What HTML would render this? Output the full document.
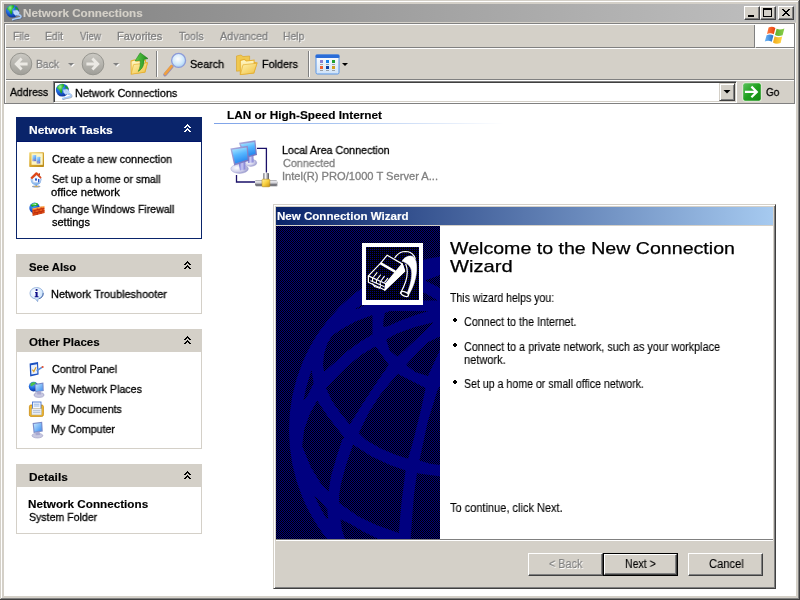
<!DOCTYPE html>
<html><head><meta charset="utf-8"><title>Network Connections</title>
<style>
html,body{margin:0;padding:0;background:#d4d0c8;}
body{width:800px;height:600px;overflow:hidden;font-family:"Liberation Sans",sans-serif;}
#root{position:relative;width:800px;height:600px;overflow:hidden;background:#d4d0c8;}
#root div,#root span,#root svg{position:absolute;box-sizing:border-box;}
.t{white-space:pre;transform-origin:0 0;will-change:transform;}
.gl{background:#808080;} .wl{background:#fff;} .dl{background:#404040;}
</style>
<style>
.cb{width:16px;height:14px;background:#d4d0c8;border:1px solid;border-color:#fff #404040 #404040 #fff;box-shadow:inset -1px -1px 0 #808080;}
</style>
<style>
.btn{background:#d4d0c8;border:1px solid;border-color:#fff #404040 #404040 #fff;box-shadow:inset -1px -1px 0 #808080;}
</style>

</head><body>
<div id="root">
<!-- main window frame -->
<div style="left:0;top:0;width:800px;height:600px;background:#d4d0c8;"></div>
<div class="wl" style="left:1px;top:1px;width:797px;height:1px;"></div>
<div class="wl" style="left:1px;top:1px;width:1px;height:597px;"></div>
<div class="gl" style="left:798px;top:1px;width:1px;height:598px;"></div>
<div class="gl" style="left:1px;top:598px;width:798px;height:1px;"></div>
<div class="dl" style="left:799px;top:0;width:1px;height:600px;"></div>
<div class="dl" style="left:0;top:599px;width:800px;height:1px;"></div>
<!-- title bar (inactive) -->
<div style="left:4px;top:4px;width:792px;height:18px;background:linear-gradient(90deg,#808080,#c0c0c0);"></div>
<!-- title icon -->
<svg style="left:5px;top:4px;" width="18" height="18" viewBox="0 0 18 18">
 <defs><radialGradient id="gb" cx="38%" cy="30%" r="75%"><stop offset="0" stop-color="#58b0ff"/><stop offset="0.55" stop-color="#1a62d8"/><stop offset="1" stop-color="#0a2a90"/></radialGradient>
 <radialGradient id="gg" cx="45%" cy="30%" r="75%"><stop offset="0" stop-color="#9af090"/><stop offset="0.5" stop-color="#2fb82c"/><stop offset="1" stop-color="#0c8a18"/></radialGradient></defs>
 <circle cx="7.3" cy="7.1" r="6.4" fill="url(#gb)"/>
 <path d="M1.8 5 C2.8 2.4 5.4 0.9 8 0.9 C9.4 1.2 9.6 2.4 8.8 3.4 C7.8 4.6 6.8 5.4 7.2 6.8 C7.6 8.4 7 9.8 6.2 10.8 C5.4 9.6 4.8 8.4 4.2 7 C3.6 6 2.6 5.8 1.8 5Z" fill="url(#gg)"/>
 <path d="M10.4 3 C11.6 2.6 12.9 3.8 13.4 5.6 C13.1 6.8 12 6.6 11.2 5.8 C10.5 5 10.1 3.8 10.4 3Z" fill="#18a028"/>
 <path d="M13.4 10.6 C15.2 11 16.6 12.2 15.7 13.3 C14.6 14.4 11 14 7.8 15.6" stroke="#3a4a70" stroke-opacity="0.45" stroke-width="1.9" fill="none" stroke-linecap="round" transform="translate(0.5,0.5)"/>
 <path d="M13.4 10.6 C15.2 11 16.6 12.2 15.7 13.3 C14.6 14.4 11 14 7.8 15.6" stroke="#a8ccf8" stroke-width="1.7" fill="none" stroke-linecap="round"/>
 <path d="M8 6.8 L12.2 5.9 L14.3 8.6 L13.7 11 L10.4 11.6 L8.6 9.4 Z" fill="#c6defc" stroke="#8ab0e8" stroke-width="0.4"/>
 <path d="M9.2 7.6 L11.8 7 M9.8 9 L12.6 8.4 M10.6 10.4 L13 9.8" stroke="#9cc0f0" stroke-width="0.5"/>
</svg>
<!-- caption buttons -->
<div class="cb" style="left:744px;top:6px;"></div>
<div class="cb" style="left:760px;top:6px;"></div>
<div class="cb" style="left:778px;top:6px;"></div>
<div style="left:748px;top:15px;width:6px;height:2px;background:#000;"></div>
<div style="left:763px;top:8px;width:9px;height:9px;border:1px solid #000;border-top-width:2px;"></div>
<svg style="left:782px;top:9px;" width="8" height="7" viewBox="0 0 8 7" shape-rendering="crispEdges"><path d="M0 0h2v1h1v1h2v-1h1v-1h2v1h-1v1h-1v1h-1v1h1v1h1v1h1v1h-2v-1h-1v-1h-2v1h-1v1h-2v-1h1v-1h1v-1h1v-1h-1v-1h-1v-1h-1z" fill="#000"/></svg>
<!-- rebar frame lines -->
<div class="gl" style="left:4px;top:23px;width:792px;height:1px;"></div>
<div class="wl" style="left:5px;top:24px;width:790px;height:1px;"></div>
<div class="gl" style="left:4px;top:23px;width:1px;height:81px;"></div>
<div class="wl" style="left:5px;top:24px;width:1px;height:79px;"></div>
<div class="gl" style="left:794px;top:23px;width:1px;height:81px;"></div>
<div class="wl" style="left:795px;top:23px;width:1px;height:81px;"></div>
<!-- throbber -->
<div style="left:755px;top:24px;width:39px;height:23px;background:#fff;"></div>
<div class="gl" style="left:754px;top:25px;width:1px;height:22px;"></div>
<div class="gl" style="left:6px;top:47px;width:749px;height:1px;"></div>
<div class="gl" style="left:756px;top:47px;width:38px;height:1px;"></div>
<div class="wl" style="left:6px;top:48px;width:788px;height:1px;"></div>
<svg style="left:764px;top:26px;" width="22" height="20" viewBox="0 0 22 20">
 <defs>
  <linearGradient id="fr" x1="0" x2="1"><stop offset="0" stop-color="#ff7a3c"/><stop offset="1" stop-color="#e8400c"/></linearGradient>
  <linearGradient id="fg" x1="0" x2="1"><stop offset="0" stop-color="#5fae2c"/><stop offset="1" stop-color="#8ad04a"/></linearGradient>
  <linearGradient id="fb" x1="0" x2="1"><stop offset="0" stop-color="#6cb6f8"/><stop offset="1" stop-color="#2a72c8"/></linearGradient>
  <linearGradient id="fy" x1="0" x2="1"><stop offset="0" stop-color="#f0a818"/><stop offset="1" stop-color="#ffd84a"/></linearGradient>
 </defs>
 <path d="M4.6 1.6 C7 0.4 9 0.6 11.4 2 L9.8 8.2 C7.6 7 5.4 6.8 3 8 Z" fill="url(#fr)"/>
 <path d="M12.6 2.8 C15 4 17.4 3.8 20.4 2.6 L18.6 9.2 C16 10.2 13.6 10.4 11 9 Z" fill="url(#fg)"/>
 <path d="M2.6 9.2 C5 8 7.2 8.2 9.4 9.4 L7.8 15.8 C5.6 14.6 3.4 14.4 0.8 15.6 Z" fill="url(#fb)"/>
 <path d="M10.6 10.2 C13 11.6 15.6 11.4 18.2 10.4 L16.6 17 C14 18 11.4 18.2 9 16.6 Z" fill="url(#fy)"/>
</svg>
<!-- toolbar / address separators -->
<div class="gl" style="left:6px;top:79px;width:788px;height:1px;"></div>
<div class="wl" style="left:6px;top:80px;width:788px;height:1px;"></div>
<div class="gl" style="left:4px;top:103px;width:791px;height:1px;"></div>
<!-- client area -->
<div style="left:4px;top:104px;width:792px;height:492px;background:#fff;"></div>

<!-- toolbar icons -->
<svg style="left:0;top:48px;" width="360" height="32" viewBox="0 48 360 32">
 <defs>
  <linearGradient id="dg" x1="0" y1="0" x2="0" y2="1"><stop offset="0" stop-color="#cbc9c3"/><stop offset="1" stop-color="#9f9e98"/></linearGradient>
  <linearGradient id="fo" x1="0" y1="0" x2="1" y2="1"><stop offset="0" stop-color="#fff3b0"/><stop offset="1" stop-color="#f0c040"/></linearGradient>
  <linearGradient id="fo2" x1="0" y1="0" x2="0" y2="1"><stop offset="0" stop-color="#fff8c8"/><stop offset="1" stop-color="#f6d060"/></linearGradient>
  <linearGradient id="ga" x1="0" y1="0" x2="1" y2="0"><stop offset="0" stop-color="#5fd048"/><stop offset="1" stop-color="#1f8a1c"/></linearGradient>
  <radialGradient id="lens" cx="45%" cy="40%" r="65%"><stop offset="0" stop-color="#ffffff"/><stop offset="0.6" stop-color="#cfe8fb"/><stop offset="1" stop-color="#9cc8f0"/></radialGradient>
  <linearGradient id="vw" x1="0" y1="0" x2="0" y2="1"><stop offset="0" stop-color="#ffffff"/><stop offset="1" stop-color="#cfe2f8"/></linearGradient>
 </defs>
 <!-- back (disabled) -->
 <circle cx="21" cy="64" r="10.8" fill="url(#dg)" stroke="#96958f" stroke-width="1"/>
 <path d="M14.2 64 L20.6 57.6 L22.6 59.6 L19.8 62.4 L27.6 62.4 L27.6 65.6 L19.8 65.6 L22.6 68.4 L20.6 70.4 Z" fill="#ebe9e4"/>
 <path d="M68 63h6l-3 3z" fill="#fff" transform="translate(1,1)"/>
 <path d="M68 63h6l-3 3z" fill="#808080"/>
 <!-- forward (disabled) -->
 <circle cx="93" cy="64" r="10.8" fill="url(#dg)" stroke="#96958f" stroke-width="1"/>
 <path d="M99.8 64 L93.4 57.6 L91.4 59.6 L94.2 62.4 L86.4 62.4 L86.4 65.6 L94.2 65.6 L91.4 68.4 L93.4 70.4 Z" fill="#ebe9e4"/>
 <path d="M113 63h6l-3 3z" fill="#fff" transform="translate(1,1)"/>
 <path d="M113 63h6l-3 3z" fill="#808080"/>
 <!-- up -->
 <path d="M130.5 60.5 L135 59.3 L137 60.8 L146 59.6 L146 62 L148 62.4 L145.4 72.6 L130.8 74.6 Z" fill="#e6b030"/>
 <path d="M131.5 61.5 L135 60.4 L136.8 61.8 L145 60.8 L145 71.8 L131.5 73.6 Z" fill="url(#fo2)"/>
 <path d="M133.6 64.6 L147.4 62.8 L144.8 72.2 L131.2 74.2 Z" fill="url(#fo)" stroke="#e0a828" stroke-width="0.6"/>
 <path d="M140.2 52.8 L148 58.6 L144 59.4 C144.4 64.4 142.6 69 138.2 71.4 C140.4 67.6 140.6 64 140 60.2 L135 61 Z" fill="url(#ga)" stroke="#1a7a18" stroke-width="0.5"/>
 <!-- separator -->
 <rect x="156" y="51" width="1" height="26" fill="#808080"/><rect x="157" y="51" width="1" height="26" fill="#fff"/>
 <!-- search -->
 <path d="M171.8 66.6 L165 74.6" stroke="#9a8fb0" stroke-width="3.6" stroke-linecap="round"/>
 <path d="M171.6 66.2 L165.2 73.8" stroke="#f0a040" stroke-width="2.6" stroke-linecap="round"/>
 <circle cx="178.6" cy="60.4" r="7" fill="url(#lens)" stroke="#8c9ad8" stroke-width="1.3"/>
 <!-- folders -->
 <path d="M236.5 56 L241 55 L243 56.6 L249.6 56 L249.6 70 L236.5 71.2 Z" fill="#f0c850" stroke="#d8a020" stroke-width="0.6"/>
 <path d="M239.8 60 L244.4 58.8 L246.6 60.4 L254.6 59.6 L254.6 62 L257.6 62.6 L254.2 73.4 L239.8 75 Z" fill="#e6b030"/>
 <path d="M240.8 61 L244.2 60 L246.2 61.4 L253.6 60.8 L253.6 72.4 L240.8 74 Z" fill="url(#fo2)"/>
 <path d="M243 64.8 L257 63.2 L253.8 73 L240.4 74.6 Z" fill="url(#fo)" stroke="#e0a828" stroke-width="0.6"/>
 <!-- separator -->
 <rect x="308" y="51" width="1" height="26" fill="#808080"/><rect x="309" y="51" width="1" height="26" fill="#fff"/>
 <!-- views -->
 <rect x="316" y="55" width="23" height="19" rx="1.5" fill="url(#vw)" stroke="#5a96e6" stroke-width="1"/>
 <rect x="315.5" y="54.5" width="24" height="3.5" rx="1.2" fill="#2a6cd8"/>
 <rect x="320" y="60" width="3" height="3" fill="#8a80d0"/><rect x="326" y="60" width="3" height="3" fill="#1a80e8"/><rect x="332" y="60" width="3" height="3" fill="#20a030"/>
 <rect x="320" y="66" width="3" height="3" fill="#f06030"/><rect x="326" y="66" width="3" height="3" fill="#1040a0"/><rect x="332" y="66" width="3" height="3" fill="#d0a020"/>
 <g fill="#9aa0a8"><rect x="320" y="64" width="3" height="1"/><rect x="326" y="64" width="3" height="1"/><rect x="332" y="64" width="3" height="1"/><rect x="320" y="70" width="3" height="1"/><rect x="326" y="70" width="3" height="1"/><rect x="332" y="70" width="3" height="1"/></g>
 <path d="M342 63h6l-3 3z" fill="#000"/>
</svg>
<!-- address combo -->
<div style="left:53px;top:81px;width:684px;height:22px;background:#fff;border:1px solid;border-color:#808080 #fff #fff #808080;box-shadow:inset 1px 1px 0 #404040, inset -1px -1px 0 #d4d0c8;"></div>
<svg style="left:55px;top:83px;" width="18" height="18" viewBox="0 0 18 18">
 <circle cx="7.3" cy="7.1" r="6.4" fill="url(#gb)"/>
 <path d="M1.8 5 C2.8 2.4 5.4 0.9 8 0.9 C9.4 1.2 9.6 2.4 8.8 3.4 C7.8 4.6 6.8 5.4 7.2 6.8 C7.6 8.4 7 9.8 6.2 10.8 C5.4 9.6 4.8 8.4 4.2 7 C3.6 6 2.6 5.8 1.8 5Z" fill="url(#gg)"/>
 <path d="M10.4 3 C11.6 2.6 12.9 3.8 13.4 5.6 C13.1 6.8 12 6.6 11.2 5.8 C10.5 5 10.1 3.8 10.4 3Z" fill="#18a028"/>
 <path d="M13.4 10.6 C15.2 11 16.6 12.2 15.7 13.3 C14.6 14.4 11 14 7.8 15.6" stroke="#3a4a70" stroke-opacity="0.45" stroke-width="1.9" fill="none" stroke-linecap="round" transform="translate(0.5,0.5)"/>
 <path d="M13.4 10.6 C15.2 11 16.6 12.2 15.7 13.3 C14.6 14.4 11 14 7.8 15.6" stroke="#a8ccf8" stroke-width="1.7" fill="none" stroke-linecap="round"/>
 <path d="M8 6.8 L12.2 5.9 L14.3 8.6 L13.7 11 L10.4 11.6 L8.6 9.4 Z" fill="#c6defc" stroke="#8ab0e8" stroke-width="0.4"/>
 <path d="M9.2 7.6 L11.8 7 M9.8 9 L12.6 8.4 M10.6 10.4 L13 9.8" stroke="#9cc0f0" stroke-width="0.5"/>
</svg>
<!-- combo dropdown button -->
<div style="left:719px;top:83px;width:16px;height:18px;background:#d4d0c8;border:1px solid;border-color:#d4d0c8 #404040 #404040 #d4d0c8;box-shadow:inset 1px 1px 0 #fff, inset -1px -1px 0 #808080;"></div>
<svg style="left:723px;top:90px;" width="8" height="4" viewBox="0 0 8 4"><path d="M0.5 0h7l-3.5 3.5z" fill="#000"/></svg>
<!-- go button -->
<svg style="left:742px;top:82px;" width="20" height="20" viewBox="0 0 20 20">
 <defs><linearGradient id="gog" x1="0" y1="0" x2="1" y2="1"><stop offset="0" stop-color="#5cc25c"/><stop offset="0.5" stop-color="#1fa01f"/><stop offset="1" stop-color="#148a14"/></linearGradient></defs>
 <rect x="0.5" y="0.5" width="19" height="19" rx="2.5" fill="#e8f4e0"/>
 <rect x="1.2" y="1.2" width="17.6" height="17.6" rx="2" fill="url(#gog)"/>
 <path d="M4 9.9h10 M10.2 5.4 L14.8 9.9 L10.2 14.4" stroke="#fff" stroke-width="2.2" fill="none" stroke-linecap="square" stroke-linejoin="miter"/>
</svg>

<!-- Network Tasks -->
<div style="left:16px;top:117px;width:186px;height:25px;background:#0a246a;"></div>
<div style="left:16px;top:141px;width:186px;height:98px;background:#fff;border:1px solid #0a246a;border-top-color:#00146a;"></div>
<!-- See Also -->
<div style="left:16px;top:254px;width:186px;height:23px;background:#d4d0c8;"></div>
<div style="left:16px;top:277px;width:186px;height:37px;background:#fff;border:1px solid #d4d0c8;border-top:none;"></div>
<!-- Other Places -->
<div style="left:16px;top:329px;width:186px;height:23px;background:#d4d0c8;"></div>
<div style="left:16px;top:352px;width:186px;height:97px;background:#fff;border:1px solid #d4d0c8;border-top:none;"></div>
<!-- Details -->
<div style="left:16px;top:464px;width:186px;height:23px;background:#d4d0c8;"></div>
<div style="left:16px;top:487px;width:186px;height:47px;background:#fff;border:1px solid #d4d0c8;border-top:none;"></div>
<!-- chevrons -->
<svg style="left:184px;top:124px;" width="7" height="8" viewBox="0 0 7 8" shape-rendering="crispEdges"><path d="M3 0h1v1h1v1h1v1h1v1h-2v-1h-1v-1h-1v1h-1v1h-2v-1h1v-1h1v-1h1z M3 4h1v1h1v1h1v1h1v1h-2v-1h-1v-1h-1v1h-1v1h-2v-1h1v-1h1v-1h1z" fill="#fff"/></svg>
<svg style="left:184px;top:261px;" width="7" height="8" viewBox="0 0 7 8" shape-rendering="crispEdges"><path d="M3 0h1v1h1v1h1v1h1v1h-2v-1h-1v-1h-1v1h-1v1h-2v-1h1v-1h1v-1h1z M3 4h1v1h1v1h1v1h1v1h-2v-1h-1v-1h-1v1h-1v1h-2v-1h1v-1h1v-1h1z" fill="#000"/></svg>
<svg style="left:184px;top:336px;" width="7" height="8" viewBox="0 0 7 8" shape-rendering="crispEdges"><path d="M3 0h1v1h1v1h1v1h1v1h-2v-1h-1v-1h-1v1h-1v1h-2v-1h1v-1h1v-1h1z M3 4h1v1h1v1h1v1h1v1h-2v-1h-1v-1h-1v1h-1v1h-2v-1h1v-1h1v-1h1z" fill="#000"/></svg>
<svg style="left:184px;top:471px;" width="7" height="8" viewBox="0 0 7 8" shape-rendering="crispEdges"><path d="M3 0h1v1h1v1h1v1h1v1h-2v-1h-1v-1h-1v1h-1v1h-2v-1h1v-1h1v-1h1z M3 4h1v1h1v1h1v1h1v1h-2v-1h-1v-1h-1v1h-1v1h-2v-1h1v-1h1v-1h1z" fill="#000"/></svg>
<!-- task icons -->
<svg style="left:28px;top:151px;" width="18" height="18" viewBox="0 0 18 18">
 <defs><linearGradient id="gold" x1="0" y1="0" x2="1" y2="1"><stop offset="0" stop-color="#f2d878"/><stop offset="0.5" stop-color="#d8a830"/><stop offset="1" stop-color="#b88818"/></linearGradient>
 <linearGradient id="mon" x1="0" y1="0" x2="1" y2="1"><stop offset="0" stop-color="#c4e8ff"/><stop offset="1" stop-color="#3a8cf0"/></linearGradient></defs>
 <rect x="1.2" y="1.3" width="14.8" height="14.8" rx="0.8" fill="url(#gold)"/>
 <rect x="3.5" y="2.3" width="11.2" height="11.5" fill="#fdf5c4"/>
 <rect x="4.4" y="3.9" width="3.8" height="4.4" rx="0.5" fill="url(#mon)"/>
 <rect x="4.6" y="8.2" width="3.6" height="2" fill="#6a78d0"/>
 <rect x="8.5" y="5.8" width="3.8" height="4.6" rx="0.5" fill="url(#mon)"/>
 <rect x="8.7" y="10.3" width="3.6" height="2.2" fill="#6a78d0"/>
 <path d="M5.4 9.2h0.8M9.6 11.4h0.8" stroke="#fff" stroke-width="0.7"/>
</svg>
<svg style="left:28px;top:171px;" width="18" height="18" viewBox="0 0 18 18">
 <defs><radialGradient id="hb" cx="40%" cy="40%" r="65%"><stop offset="0" stop-color="#e8f4ff"/><stop offset="1" stop-color="#6aa4e8"/></radialGradient></defs>
 <ellipse cx="8.2" cy="15.6" rx="4.2" ry="1" fill="#9aa0b0"/><rect x="6.8" y="15" width="2.8" height="1" fill="#e8b830"/>
 <rect x="7.6" y="12" width="1.2" height="3.4" fill="#7a90c0"/>
 <circle cx="8" cy="8.6" r="5.4" fill="url(#hb)"/>
 <path d="M4.4 7.4 L8.6 4 L12.8 7.6 L12.2 11.8 L5.2 11.4 Z" fill="#f4f8ff" stroke="#9ab0d8" stroke-width="0.4"/>
 <path d="M2.4 6.8 L7.6 1.6 L9 1.2 L13.6 6.4 L12.6 7.8 L8.6 4 L4 8.2 Z" fill="#e04818"/>
 <path d="M10.6 2.2h1.4v2h-1.4z" fill="#c03c10"/>
 <rect x="7" y="7.4" width="2" height="2.2" fill="#2a5ac8"/><rect x="10" y="8" width="1.4" height="3.4" fill="#2a5ac8"/>
</svg>
<svg style="left:28px;top:201px;" width="18" height="18" viewBox="0 0 18 18">
 <defs><linearGradient id="brk" x1="0" y1="0" x2="0.2" y2="1"><stop offset="0" stop-color="#ff9a3a"/><stop offset="0.5" stop-color="#f0641c"/><stop offset="1" stop-color="#c8380c"/></linearGradient></defs>
 <circle cx="6.6" cy="6.9" r="5.3" fill="url(#gb)"/>
 <path d="M2.6 4.4 C3.8 2.4 6.4 1.6 8.8 2 C10 2.6 10.6 3.6 9.6 4.4 C8.4 5 7 4.6 6 5.2 C5 6 3.6 5.8 2.6 4.4Z" fill="url(#gg)"/>
 <path d="M6.4 3.4 C7 2.8 8 2.8 8.4 3.4 C7.8 4 7 4 6.4 3.4Z" fill="#e8fff0"/>
 <path d="M4.4 7.5 L16.3 4.9 L16.7 12 L4.6 15 Z" fill="url(#brk)"/>
 <path d="M4.45 10 L16.45 7.3 M4.5 12.5 L16.6 9.7 M9.2 6.5 L9.3 8.9 M13 5.6 L13.1 8 M6.8 9.5 L6.9 12 M11 8.5 L11.1 11 M14.8 7.7 L14.9 10.1 M9.2 11.4 L9.3 13.8 M13 10.5 L13.1 12.9" stroke="#b01c08" stroke-width="0.7"/>
 <path d="M4.6 8 L16.2 5.4" stroke="#ffd070" stroke-width="0.6"/>
</svg>
<!-- see also icon -->
<svg style="left:28px;top:286px;" width="18" height="18" viewBox="0 0 18 18">
 <defs><radialGradient id="inf" cx="40%" cy="35%" r="70%"><stop offset="0" stop-color="#ffffff"/><stop offset="0.7" stop-color="#d4e8fc"/><stop offset="1" stop-color="#8ab0e0"/></radialGradient></defs>
 <path d="M8.6 1.6 C12.6 1.6 15.2 4.2 15.2 7.4 C15.2 10.4 13 12.4 10.2 12.8 L9.6 15.6 L7.4 12.8 C4.4 12.6 2 10.4 2 7.4 C2 4.2 4.8 1.6 8.6 1.6Z" fill="url(#inf)" stroke="#7a9cd0" stroke-width="0.7"/>
 <path d="M11 12.6 C13.6 12 15.4 10 15.2 7" stroke="#3a5aa0" stroke-width="0.8" fill="none"/>
 <circle cx="8.6" cy="4" r="1.1" fill="#10108a"/>
 <path d="M7.2 6h2.4v4.2h0.9v1h-3.8v-1h0.9v-3.2h-0.6z" fill="#10108a"/>
</svg>
<!-- other places icons -->
<svg style="left:28px;top:361px;" width="18" height="18" viewBox="0 0 18 18">
 <path d="M1.6 2.4 L10 1 L10.6 13.6 L2.2 15.4 Z" fill="#1a50c0"/>
 <path d="M3 4.2 L9 3.2 L9.4 12.4 L3.4 13.6 Z" fill="#e8f0fc"/>
 <path d="M4.4 8.6 L5.8 10.6 L8 6.2" stroke="#e0a020" stroke-width="1.1" fill="none"/>
 <path d="M8.6 9.8 L14 6.4" stroke="#5a90e0" stroke-width="1.6"/>
 <circle cx="14.6" cy="6" r="1.1" fill="#e05030"/>
</svg>
<svg style="left:28px;top:381px;" width="18" height="18" viewBox="0 0 18 18">
 <circle cx="5.6" cy="5.6" r="4.8" fill="url(#gb)"/>
 <path d="M2.6 2.6 C4 1 6.6 0.8 7.8 1.6 C8 3 6.6 4 5.4 4 C4.6 5.2 3.4 5.4 2.4 4.8 Z" fill="#4cc04a"/>
 <path d="M6.6 3 L15.4 1.6 L15.8 10 L7.4 11.6 Z" fill="#7a8ac8"/>
 <path d="M7.6 4 L14.4 2.8 L14.8 9.2 L8.2 10.4 Z" fill="url(#mon)"/>
 <ellipse cx="11" cy="14" rx="5" ry="2.4" fill="#c8c8e0" stroke="#8a8ab8" stroke-width="0.5"/>
 <path d="M9.2 10.6 L12.8 10 L13.2 13.4 L9.2 13.6 Z" fill="#a8a8d0"/>
</svg>
<svg style="left:28px;top:401px;" width="18" height="18" viewBox="0 0 18 18">
 <rect x="1.4" y="4" width="14" height="11.4" rx="1.6" fill="#f0b830" stroke="#c88a10" stroke-width="0.8"/>
 <rect x="4.4" y="1" width="8.6" height="8" fill="#f4f8ff" stroke="#3a6ac8" stroke-width="0.8"/>
 <path d="M5.8 3.2h5.6M5.8 5h5.6" stroke="#8ab0e0" stroke-width="0.9"/>
 <rect x="3.6" y="7.6" width="10.2" height="6.4" fill="#e8ecf4" stroke="#b0a070" stroke-width="0.5"/>
 <path d="M5 9.6h7.4M5 11.4h7.4" stroke="#a8b8d0" stroke-width="0.8"/>
</svg>
<svg style="left:28px;top:421px;" width="18" height="18" viewBox="0 0 18 18">
 <path d="M4.6 2 L14.2 0.8 L14.8 10.4 L5.6 12 Z" fill="#7a8ac8"/>
 <path d="M5.8 3 L13.2 2 L13.6 9.6 L6.6 10.8 Z" fill="url(#mon)"/>
 <ellipse cx="9.4" cy="14.6" rx="5.4" ry="2.4" fill="#c8c8e0" stroke="#8a8ab8" stroke-width="0.5"/>
 <path d="M7.6 11.2 L11.6 10.6 L12 14 L7.6 14.2 Z" fill="#a8a8d0"/>
</svg>

<!-- group header line -->
<div style="left:214px;top:123px;width:290px;height:1px;background:linear-gradient(90deg,#7da2e8 0%,#a8c4f0 40%,#ffffff 100%);"></div>
<!-- LAN icon -->
<svg style="left:226px;top:136px;" width="56" height="54" viewBox="226 136 56 54">
 <defs>
  <linearGradient id="scr" x1="0" y1="0" x2="0.3" y2="1"><stop offset="0" stop-color="#b8ecff"/><stop offset="0.5" stop-color="#58b8ff"/><stop offset="1" stop-color="#2a8af0"/></linearGradient>
  <linearGradient id="bez" x1="0" y1="0" x2="1" y2="1"><stop offset="0" stop-color="#b0b0e0"/><stop offset="1" stop-color="#6a68b8"/></linearGradient>
  <radialGradient id="bas" cx="35%" cy="40%" r="70%"><stop offset="0" stop-color="#ffffff"/><stop offset="0.6" stop-color="#d0d0ea"/><stop offset="1" stop-color="#9090c8"/></radialGradient>
  <linearGradient id="std" x1="0" y1="0" x2="1" y2="0"><stop offset="0" stop-color="#6a68d0"/><stop offset="0.5" stop-color="#c8c8f4"/><stop offset="1" stop-color="#7a78d0"/></linearGradient>
  <linearGradient id="met" x1="0" y1="0" x2="0" y2="1"><stop offset="0" stop-color="#8a8a90"/><stop offset="0.3" stop-color="#f4f4f8"/><stop offset="0.7" stop-color="#a0a0a8"/><stop offset="1" stop-color="#404048"/></linearGradient>
  <linearGradient id="metv" x1="0" y1="0" x2="1" y2="0"><stop offset="0" stop-color="#707078"/><stop offset="0.4" stop-color="#f4f4f8"/><stop offset="1" stop-color="#505058"/></linearGradient>
  <linearGradient id="yel" x1="0" y1="0" x2="1" y2="1"><stop offset="0" stop-color="#fff0a0"/><stop offset="0.5" stop-color="#f8d040"/><stop offset="1" stop-color="#c89010"/></linearGradient>
 </defs>
 <!-- wires -->
 <path d="M257 148.4 H266.4 V172.5" stroke="#1a1068" stroke-width="1.3" fill="none"/>
 <path d="M236.5 175 V182 H255" stroke="#1a1068" stroke-width="1.3" fill="none"/>
 <!-- back computer -->
 <ellipse cx="250.8" cy="162.8" rx="6" ry="3.6" fill="url(#bas)" stroke="#9a9ad0" stroke-width="0.4"/>
 <path d="M247.4 156 L253.4 154.6 L253.6 162.4 L248 163 Z" fill="url(#std)"/>
 <path d="M239 142.8 L255.4 140.2 L257 155 L244 158.6 Z" fill="url(#bez)"/>
 <path d="M240.4 144.2 L254.4 142 L255.6 153.8 L248.6 156 Z" fill="url(#scr)"/>
 <!-- front computer -->
 <ellipse cx="239.6" cy="168.8" rx="8.8" ry="4.6" fill="url(#bas)" stroke="#9a9ad0" stroke-width="0.4"/>
 <path d="M238.6 162.6 L245.2 160.6 L245.4 169.6 L240 170.6 Z" fill="url(#std)"/>
 <path d="M230.4 148.4 L247.8 145.8 L249 160.8 L234.2 165.6 Z" fill="url(#bez)"/>
 <path d="M232 149.8 L246.6 147.6 L247.6 159.6 L235.2 163.6 Z" fill="url(#scr)"/>
 <!-- T connector -->
 <rect x="255.6" y="181.2" width="22" height="5.2" rx="1" fill="#606068" opacity="0.5"/>
 <rect x="255" y="180.2" width="22" height="5.2" rx="1" fill="url(#met)"/>
 <rect x="263.2" y="173" width="5.8" height="7" rx="0.8" fill="url(#metv)"/>
 <rect x="262" y="179.2" width="7.8" height="7.6" rx="0.8" fill="url(#yel)" stroke="#b88a10" stroke-width="0.5"/>
</svg>

<!-- wizard dialog frame -->
<div style="left:273px;top:204px;width:503px;height:385px;background:#d4d0c8;border:1px solid;border-color:#d4d0c8 #404040 #404040 #d4d0c8;box-shadow:inset 1px 1px 0 #fff, inset -1px -1px 0 #808080;"></div>
<div style="left:276px;top:207px;width:497px;height:18px;background:linear-gradient(90deg,#0a246a,#a6caf0);"></div>
<!-- white page -->
<div style="left:440px;top:226px;width:333px;height:313px;background:#fff;"></div>
<!-- etched separator -->
<div class="gl" style="left:276px;top:539px;width:497px;height:1px;"></div>
<div class="wl" style="left:276px;top:540px;width:497px;height:1px;"></div>
<!-- bullets -->
<svg style="left:453px;top:318px;" width="4" height="4" shape-rendering="crispEdges"><path d="M1 0h2v1h1v2h-1v1h-2v-1h-1v-2h1z" fill="#000"/></svg>
<svg style="left:453px;top:343px;" width="4" height="4" shape-rendering="crispEdges"><path d="M1 0h2v1h1v2h-1v1h-2v-1h-1v-2h1z" fill="#000"/></svg>
<svg style="left:453px;top:380px;" width="4" height="4" shape-rendering="crispEdges"><path d="M1 0h2v1h1v2h-1v1h-2v-1h-1v-2h1z" fill="#000"/></svg>
<!-- buttons -->
<div class="btn" style="left:528px;top:553px;width:75px;height:23px;"></div>
<div style="left:603px;top:553px;width:75px;height:23px;background:#000;"></div>
<div class="btn" style="left:604px;top:554px;width:73px;height:21px;"></div>
<div class="btn" style="left:688px;top:553px;width:75px;height:23px;"></div>

<!-- wizard banner -->
<svg style="left:276px;top:226px;" width="164" height="313" viewBox="276 226 164 313">
 <defs>
  <pattern id="dith" x="0" y="0" width="2" height="2" patternUnits="userSpaceOnUse"><rect width="2" height="2" fill="#000080"/><rect x="0" y="0" width="1" height="1" fill="#000"/><rect x="1" y="1" width="1" height="1" fill="#000"/></pattern>
  <pattern id="dith2" x="0" y="0" width="2" height="2" patternUnits="userSpaceOnUse"><rect width="2" height="2" fill="#000"/><rect x="0" y="1" width="1" height="1" fill="#000080"/></pattern>
 </defs>
 <rect x="276" y="226" width="164" height="313" fill="url(#dith)" shape-rendering="crispEdges"/>
 <circle cx="464" cy="430" r="175" fill="#000080"/>
 <!--CELLS-->
 <polygon points="372.5,315.0 356.0,321.2 343.5,328.0 332.2,335.6 327.2,343.8 324.1,353.8 322.9,365.0 324.1,372.0 334.8,362.5 347.2,351.2 361.0,341.2 372.5,334.4" fill="url(#dith)"/>
 <polygon points="385.0,313.0 390.0,311.0 428.5,311.0 415.0,315.2 400.0,320.8 388.0,326.2 383.2,327.0 383.4,320.0" fill="url(#dith)"/>
 <polygon points="386.3,339.4 396.3,333.8 415.0,327.0 433.8,322.2 427.5,328.8 411.3,343.8 397.5,357.0 389.4,350.0" fill="url(#dith)"/>
 <polygon points="406.2,365.0 417.5,351.9 427.5,342.5 440.0,336.2 440.0,350.0 433.0,365.0 428.0,376.0 415.0,371.9" fill="url(#dith)"/>
 <polygon points="375.6,346.2 361.0,355.0 346.0,367.5 338.5,375.0 326.0,388.1 332.2,401.2 341.0,413.8 349.8,424.4 363.5,402.5 377.5,381.2 388.8,365.0" fill="url(#dith)"/>
 <polygon points="397.5,373.8 425.6,388.1 421.2,408.8 413.5,440.0 408.1,458.8 396.2,455.0 381.2,448.8 366.0,440.0 358.8,433.1 368.8,412.5 380.0,395.0" fill="url(#dith)"/>
 <polygon points="440.0,386.0 437.5,390.0 432.5,406.2 427.5,422.5 423.8,440.0 419.4,460.6 430.0,463.8 440.0,465.0" fill="url(#dith)"/>
 <polygon points="311.6,370.0 313.6,383.0 308.0,395.0 303.5,400.6 306.0,388.0 309.0,378.0" fill="url(#dith)"/>
 <polygon points="317.2,400.6 328.5,417.5 344.3,437.5 342.2,440.0 337.2,455.0 331.0,476.2 328.5,491.9 321.0,483.8 311.0,467.5 302.2,446.2 302.9,440.0 304.1,430.0 309.8,413.8" fill="url(#dith)"/>
 <polygon points="353.0,444.4 371.2,456.2 390.0,465.0 405.6,470.6 403.1,490.0 401.2,505.5 398.8,533.0 377.5,525.5 358.8,516.8 339.1,503.0 339.1,495.0 341.0,483.8 346.0,465.0" fill="url(#dith)"/>
 <polygon points="314.1,494.9 321.0,501.8 327.2,509.2 328.2,519.2 326.0,518.0 319.8,506.8" fill="url(#dith)"/>
 <polygon points="416.9,473.3 430.0,475.0 440.0,476.2 440.0,539.0 410.6,539.0 413.1,505.5 413.8,496.2" fill="url(#dith)"/>
 <polygon points="340.4,519.2 351.0,524.2 363.5,531.8 377.5,538.5 377.5,539.0 345.0,539.0 342.2,530.5" fill="url(#dith)"/>
 <polygon points="425.0,280.6 440.0,275.0 440.0,288.0" fill="url(#dith)"/>
 <polygon points="405.0,282.0 438.0,300.6 405.0,300.6" fill="url(#dith)"/>
 <polygon points="355.0,309.0 362.0,305.0 365.0,305.0 358.0,308.8" fill="url(#dith)"/>
 <!--/CELLS-->
 <!-- icon box -->
 <rect x="362" y="243" width="61" height="62" fill="#fff"/>
 <rect x="366" y="247" width="53" height="53" fill="url(#dith2)" shape-rendering="crispEdges"/>
 <!--PLUG-->
 <g fill="none" stroke="#fff" stroke-width="1.25" stroke-linejoin="round" stroke-linecap="round">
  <!-- cable -->
  <path d="M394.9 257.8 C397.5 253.5, 401 251.6, 405.5 251.5 C410 251.5, 413.5 254, 415.2 258.4" stroke-width="1.2"/>
  <path d="M402.2 261 C403.5 258.5, 406.5 256, 410.4 256 C413 256, 415.2 258, 416 261.5 C417 266, 416.8 273, 415.3 278.8 C414 284.5, 411.5 290, 408.5 295.3 L407 293.4 C409 289, 411 282.5, 411.6 276.9 C412 272, 411.5 269.5, 410.4 267.5 C409 265, 407 263, 404.1 261.9 Z" fill="#fff" stroke-width="0.6"/>
  <path d="M405.8 264.2 C407.6 268.5, 407.8 275, 405.6 281.75 C404.5 285, 402.5 289.5, 400.4 293.2" stroke-width="1.2"/>
  <ellipse cx="404.7" cy="294" rx="4" ry="2.1" transform="rotate(24 404.7 294)" fill="#000010"/>
  <!-- body -->
  <path d="M387.2 255.2 L402.2 263.9 L404.6 271.1 L384.8 290 L368.4 282.2 L368.4 275.9 L380.9 262.9 Z" fill="url(#dith2)"/>
  <path d="M402.2 263.9 L404.6 271.1 L384.8 290 L385.8 283.7 Z" fill="#fff"/>
  <path d="M381.2 263.6 L394.6 271.4" stroke-width="2.6"/>
  <path d="M368.4 275.9 L385.8 283.7"/>
  <!-- contacts -->
  <path d="M373.6 277 L377 272.6 M377.5 278.9 L380.5 275 M381.4 280.3 L384.3 276.4 M384.8 282.2 L387.7 278.4" stroke-width="1.1"/>
  <!-- front teeth -->
  <path d="M370.8 280.8 L384 286.6 M372.6 277.8 L372.6 281.6 M376.4 279.6 L376.4 283.2 M380.2 281.4 L380.2 285 M372.8 283.8 L374.6 286.6 L379.6 288.2 L380.4 286.2" stroke-width="1.1"/>
 </g>
 <!--/PLUG-->
</svg>

<span class="t" style="left:23.21px;top:6.69px;font-size:11px;line-height:13px;color:#d4d0c8;transform:scaleX(1.0580);font-weight:bold;-webkit-text-stroke:0.15px;">Network Connections</span>
<span class="t" style="left:13.05px;top:29.69px;font-size:11px;line-height:13px;color:#808080;transform:scaleX(0.9477);-webkit-text-stroke:0.3px;text-shadow:1px 1px 0 #fff;">File</span>
<span class="t" style="left:45.06px;top:29.69px;font-size:11px;line-height:13px;color:#808080;transform:scaleX(0.9444);-webkit-text-stroke:0.3px;text-shadow:1px 1px 0 #fff;">Edit</span>
<span class="t" style="left:80.00px;top:29.69px;font-size:11px;line-height:13px;color:#808080;transform:scaleX(0.8842);-webkit-text-stroke:0.3px;text-shadow:1px 1px 0 #fff;">View</span>
<span class="t" style="left:117.00px;top:29.69px;font-size:11px;line-height:13px;color:#808080;transform:scaleX(1.0000);-webkit-text-stroke:0.3px;text-shadow:1px 1px 0 #fff;">Favorites</span>
<span class="t" style="left:178.76px;top:29.69px;font-size:11px;line-height:13px;color:#808080;transform:scaleX(0.9600);-webkit-text-stroke:0.3px;text-shadow:1px 1px 0 #fff;">Tools</span>
<span class="t" style="left:220.00px;top:29.69px;font-size:11px;line-height:13px;color:#808080;transform:scaleX(0.9824);-webkit-text-stroke:0.3px;text-shadow:1px 1px 0 #fff;">Advanced</span>
<span class="t" style="left:283.06px;top:29.69px;font-size:11px;line-height:13px;color:#808080;transform:scaleX(0.9412);-webkit-text-stroke:0.3px;text-shadow:1px 1px 0 #fff;">Help</span>
<span class="t" style="left:36.06px;top:57.69px;font-size:11px;line-height:13px;color:#808080;transform:scaleX(0.9362);-webkit-text-stroke:0.3px;text-shadow:1px 1px 0 #fff;">Back</span>
<span class="t" style="left:190.01px;top:57.69px;font-size:11px;line-height:13px;color:#000;transform:scaleX(0.9778);-webkit-text-stroke:0.3px;">Search</span>
<span class="t" style="left:262.02px;top:57.69px;font-size:11px;line-height:13px;color:#000;transform:scaleX(0.9787);-webkit-text-stroke:0.3px;">Folders</span>
<span class="t" style="left:10.00px;top:85.69px;font-size:11px;line-height:13px;color:#000;transform:scaleX(0.9500);-webkit-text-stroke:0.3px;">Address</span>
<span class="t" style="left:75.02px;top:86.69px;font-size:11px;line-height:13px;color:#000;transform:scaleX(0.9782);-webkit-text-stroke:0.3px;">Network Connections</span>
<span class="t" style="left:765.55px;top:85.69px;font-size:11px;line-height:13px;color:#000;transform:scaleX(0.9091);-webkit-text-stroke:0.3px;">Go</span>
<span class="t" style="left:28.58px;top:123.69px;font-size:11px;line-height:13px;color:#fff;transform:scaleX(1.0904);font-weight:bold;-webkit-text-stroke:0.15px;">Network Tasks</span>
<span class="t" style="left:51.51px;top:152.69px;font-size:11px;line-height:13px;color:#000;transform:scaleX(0.9876);-webkit-text-stroke:0.3px;">Create a new connection</span>
<span class="t" style="left:51.52px;top:172.69px;font-size:11px;line-height:13px;color:#000;transform:scaleX(0.9589);-webkit-text-stroke:0.3px;">Set up a home or small</span>
<span class="t" style="left:51.49px;top:185.69px;font-size:11px;line-height:13px;color:#000;transform:scaleX(1.0186);-webkit-text-stroke:0.3px;">office network</span>
<span class="t" style="left:51.52px;top:202.69px;font-size:11px;line-height:13px;color:#000;transform:scaleX(0.9619);-webkit-text-stroke:0.3px;">Change Windows Firewall</span>
<span class="t" style="left:51.50px;top:215.69px;font-size:11px;line-height:13px;color:#000;transform:scaleX(1.0000);-webkit-text-stroke:0.3px;">settings</span>
<span class="t" style="left:29.14px;top:260.69px;font-size:11px;line-height:13px;color:#000;transform:scaleX(1.0242);font-weight:bold;-webkit-text-stroke:0.15px;">See Also</span>
<span class="t" style="left:51.01px;top:287.69px;font-size:11px;line-height:13px;color:#000;transform:scaleX(0.9935);-webkit-text-stroke:0.3px;">Network Troubleshooter</span>
<span class="t" style="left:28.87px;top:335.69px;font-size:11px;line-height:13px;color:#000;transform:scaleX(1.0506);font-weight:bold;-webkit-text-stroke:0.15px;">Other Places</span>
<span class="t" style="left:51.51px;top:362.69px;font-size:11px;line-height:13px;color:#000;transform:scaleX(0.9771);-webkit-text-stroke:0.3px;">Control Panel</span>
<span class="t" style="left:51.04px;top:382.69px;font-size:11px;line-height:13px;color:#000;transform:scaleX(0.9650);-webkit-text-stroke:0.3px;">My Network Places</span>
<span class="t" style="left:51.03px;top:402.69px;font-size:11px;line-height:13px;color:#000;transform:scaleX(0.9653);-webkit-text-stroke:0.3px;">My Documents</span>
<span class="t" style="left:51.03px;top:422.69px;font-size:11px;line-height:13px;color:#000;transform:scaleX(0.9692);-webkit-text-stroke:0.3px;">My Computer</span>
<span class="t" style="left:28.59px;top:470.69px;font-size:11px;line-height:13px;color:#000;transform:scaleX(1.0743);font-weight:bold;-webkit-text-stroke:0.15px;">Details</span>
<span class="t" style="left:28.20px;top:497.69px;font-size:11px;line-height:13px;color:#000;transform:scaleX(1.0625);font-weight:bold;-webkit-text-stroke:0.15px;">Network Connections</span>
<span class="t" style="left:28.52px;top:510.69px;font-size:11px;line-height:13px;color:#000;transform:scaleX(0.9609);-webkit-text-stroke:0.3px;">System Folder</span>
<span class="t" style="left:227.19px;top:108.69px;font-size:11px;line-height:13px;color:#000;transform:scaleX(1.0750);font-weight:bold;-webkit-text-stroke:0.15px;">LAN or High-Speed Internet</span>
<span class="t" style="left:282.03px;top:143.69px;font-size:11px;line-height:13px;color:#000;transform:scaleX(0.9725);-webkit-text-stroke:0.3px;">Local Area Connection</span>
<span class="t" style="left:282.51px;top:156.69px;font-size:11px;line-height:13px;color:#808080;transform:scaleX(0.9808);-webkit-text-stroke:0.3px;">Connected</span>
<span class="t" style="left:281.99px;top:169.69px;font-size:11px;line-height:13px;color:#808080;transform:scaleX(1.0115);-webkit-text-stroke:0.3px;">Intel(R) PRO/1000 T Server A...</span>
<span class="t" style="left:277.21px;top:209.69px;font-size:11px;line-height:13px;color:#fff;transform:scaleX(1.0505);font-weight:bold;-webkit-text-stroke:0.15px;">New Connection Wizard</span>
<span class="t" style="left:449.71px;top:238.61px;font-size:17px;line-height:19px;color:#000;transform:scaleX(1.1524);-webkit-text-stroke:0.25px;">Welcome to the New Connection</span>
<span class="t" style="left:449.70px;top:256.61px;font-size:17px;line-height:19px;color:#000;transform:scaleX(1.1845);-webkit-text-stroke:0.25px;">Wizard</span>
<span class="t" style="left:449.78px;top:290.84px;font-size:12px;line-height:14px;color:#000;transform:scaleX(0.8766);-webkit-text-stroke:0.12px;">This wizard helps you:</span>
<span class="t" style="left:464.05px;top:314.84px;font-size:12px;line-height:14px;color:#000;transform:scaleX(0.8970);-webkit-text-stroke:0.12px;">Connect to the Internet.</span>
<span class="t" style="left:464.05px;top:339.84px;font-size:12px;line-height:14px;color:#000;transform:scaleX(0.8987);-webkit-text-stroke:0.12px;">Connect to a private network, such as your workplace</span>
<span class="t" style="left:463.81px;top:352.84px;font-size:12px;line-height:14px;color:#000;transform:scaleX(0.9195);-webkit-text-stroke:0.12px;">network.</span>
<span class="t" style="left:464.06px;top:376.84px;font-size:12px;line-height:14px;color:#000;transform:scaleX(0.8826);-webkit-text-stroke:0.12px;">Set up a home or small office network.</span>
<span class="t" style="left:449.77px;top:500.84px;font-size:12px;line-height:14px;color:#000;transform:scaleX(0.9177);-webkit-text-stroke:0.12px;">To continue, click Next.</span>
<span class="t" style="left:548.55px;top:556.84px;font-size:12px;line-height:14px;color:#808080;transform:scaleX(0.9041);-webkit-text-stroke:0.12px;text-shadow:1px 1px 0 #fff;">&lt; Back</span>
<span class="t" style="left:625.12px;top:556.84px;font-size:12px;line-height:14px;color:#000;transform:scaleX(0.8806);-webkit-text-stroke:0.12px;">Next &gt;</span>
<span class="t" style="left:708.53px;top:556.84px;font-size:12px;line-height:14px;color:#000;transform:scaleX(0.9306);-webkit-text-stroke:0.12px;">Cancel</span>
</div>
</body></html>
